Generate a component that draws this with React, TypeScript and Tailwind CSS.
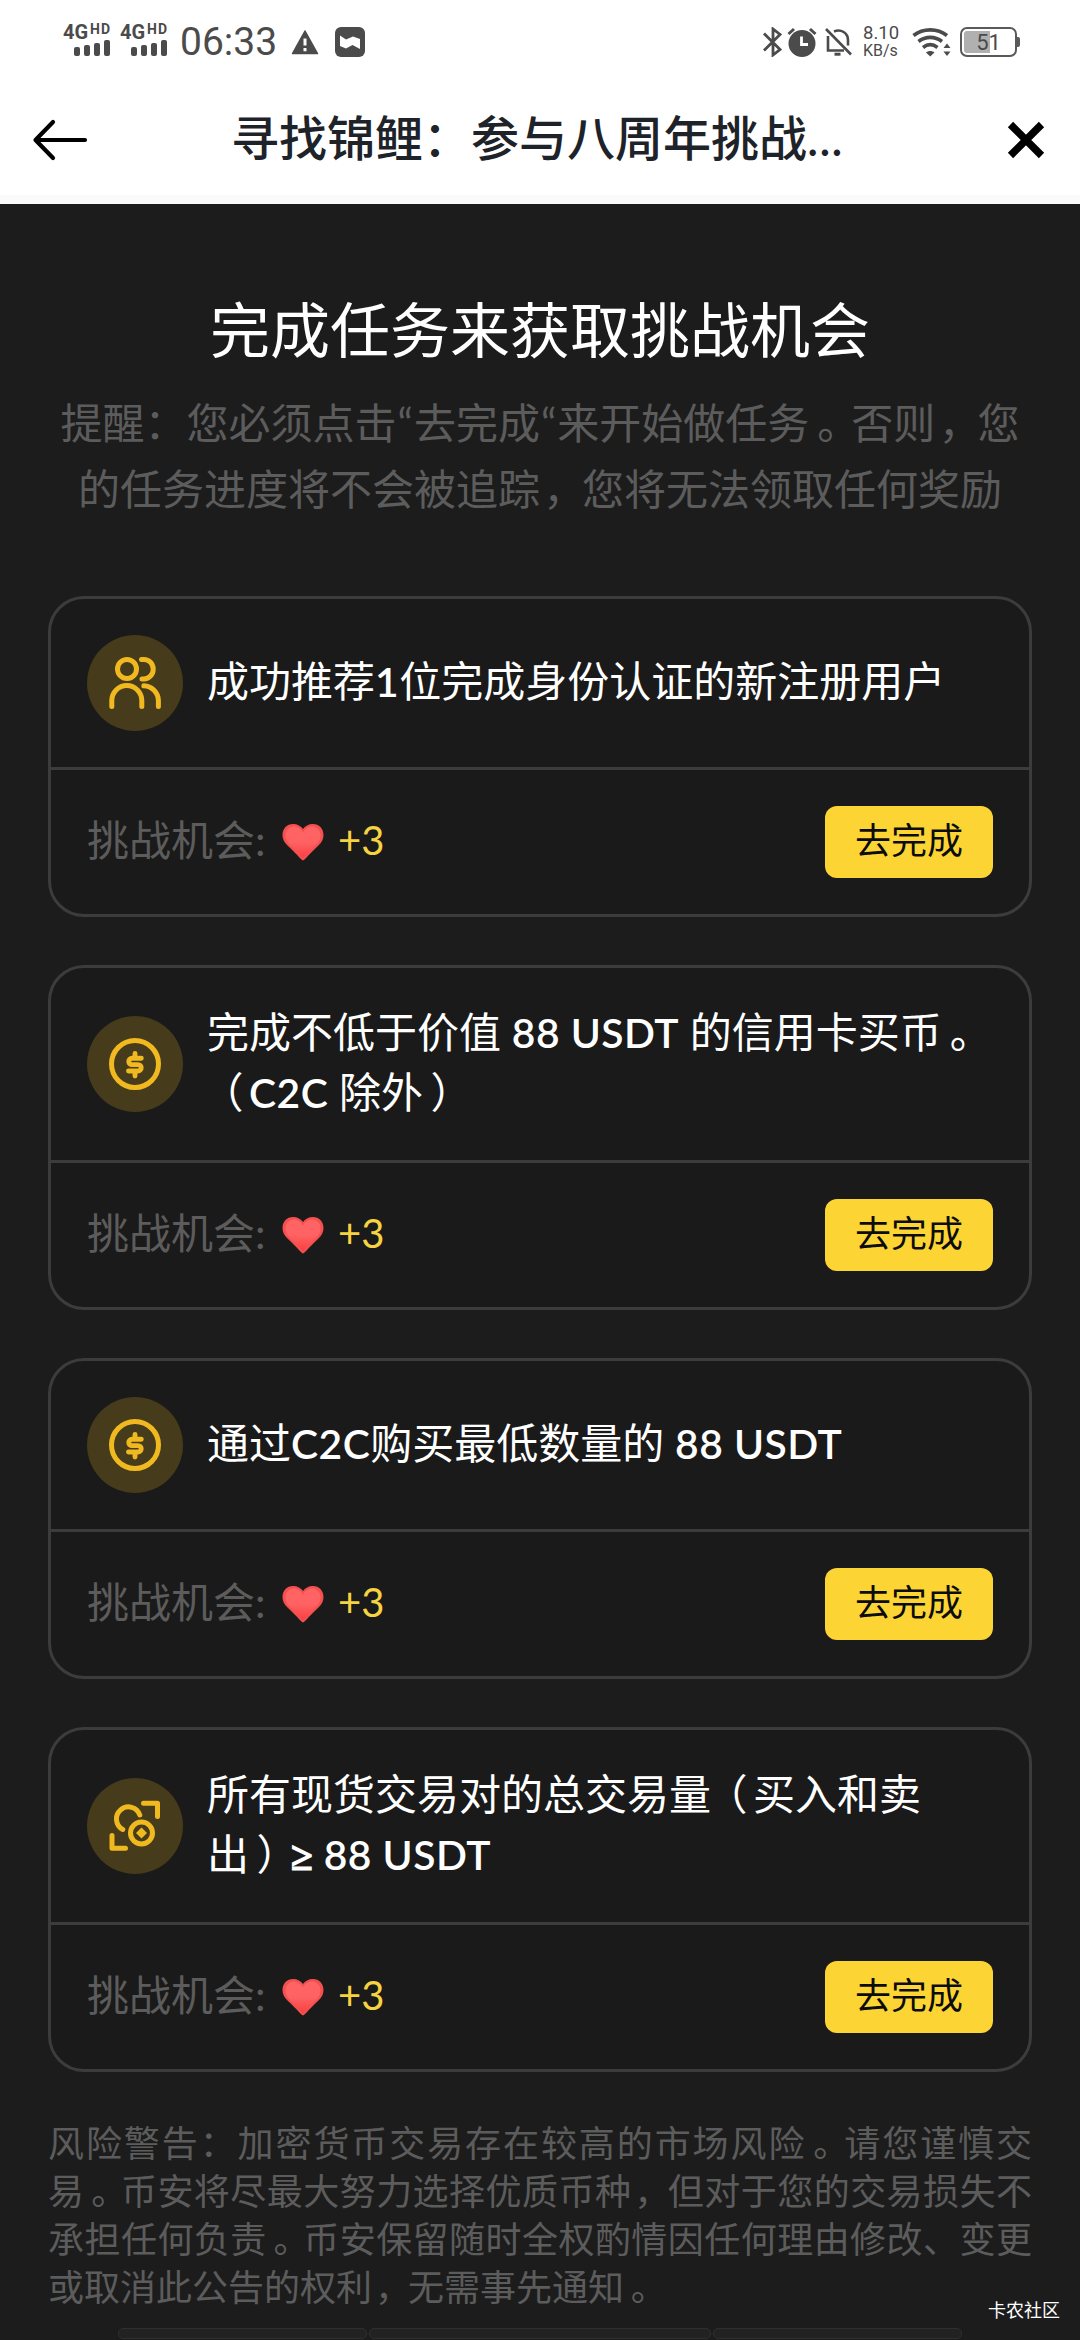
import React from 'react';

type IconName = 'people' | 'dollar' | 'trade';

interface Task {
  id: number;
  icon: IconName;
  lines: string[];
}

const tasks: Task[] = [
  { id: 1, icon: 'people', lines: ['成功推荐1位完成身份认证的新注册用户'] },
  { id: 2, icon: 'dollar', lines: ['完成不低于价值 88 USDT 的信用卡买币。', '（C2C 除外）'] },
  { id: 3, icon: 'dollar', lines: ['通过C2C购买最低数量的 88 USDT'] },
  { id: 4, icon: 'trade', lines: ['所有现货交易对的总交易量（买入和卖', '出）≥ 88 USDT'] },
];

const riskLines = [
  '风险警告：加密货币交易存在较高的市场风险。请您谨慎交',
  '易。币安将尽最大努力选择优质币种，但对于您的交易损失不',
  '承担任何负责。币安保留随时全权酌情因任何理由修改、变更',
];

// Nudges full-width punctuation towards the middle of its cell
const punctuation: Record<string, string> = {
  '。': 'pl-[0.19em] tracking-[-0.19em]',
  '，': 'pl-[0.08em] tracking-[-0.08em]',
  '）': 'pl-[0.18em] tracking-[-0.18em]',
  '（': "pl-[0.37em] pr-[0.13em] [font-feature-settings:'halt']",
  '“': 'px-[1px]',
  '≥': "font-['Noto_Sans'] text-[0.95em] font-bold [-webkit-text-stroke:1.2px_#fff]",
};

const RichText: React.FC<{ text: string }> = ({ text }) => (
  <>
    {text.split(/([A-Z0-9]+(?: [A-Z0-9]+)*|[。，（）“≥])/).map((part, idx) => {
      if (punctuation[part]) return <span key={idx} className={punctuation[part]}>{part}</span>;
      if (/^[A-Z0-9]/.test(part)) return <span key={idx} className="text-[0.97em] tracking-[0.5px] font-semibold">{part}</span>;
      return part;
    })}
  </>
);

const SignalIcon: React.FC = () => (
  <div className="w-[47px] h-[32px] flex flex-col items-end justify-between">
    <div className="w-[47px] flex items-start justify-between font-['Roboto'] font-bold leading-none">
      <span className="text-[20px] leading-[16px]">4G</span>
      <span className="text-[14px] leading-[11px] tracking-[1px] -mr-[1px]">HD</span>
    </div>
    <div className="flex items-end gap-[4px]">
      <div className="w-[6px] h-[9px] rounded-[2px] bg-[#4b4b4b]" />
      <div className="w-[6px] h-[11px] rounded-[2px] bg-[#4b4b4b]" />
      <div className="w-[6px] h-[13px] rounded-[2px] bg-[#4b4b4b]" />
      <div className="w-[6px] h-[16px] rounded-[2px] bg-[#4b4b4b]" />
    </div>
  </div>
);

const StatusBar: React.FC = () => (
  <div className="h-[84px] pl-[63px] pr-[60px] flex justify-between text-[#4b4b4b]">
    <div className="flex items-center h-[84px]">
      <div className="flex gap-[10px] -mt-[4px]">
        <SignalIcon />
        <SignalIcon />
      </div>
      <span className="ml-[13px] w-[99px] font-['Roboto'] text-[39px] leading-[44px]">06:33</span>
      <svg className="ml-[12px]" width="28" height="26" viewBox="0 0 28 26">
        <path d="M14 2L26.5 24.5H1.5Z" fill="#4b4b4b" stroke="#4b4b4b" strokeWidth="1.5" strokeLinejoin="round" />
        <path d="M14 9.5v7M14 19v3.2" stroke="#fff" strokeWidth="3" />
      </svg>
      <svg className="ml-[16px]" width="30" height="30" viewBox="0 0 30 30">
        <rect width="30" height="30" rx="6" fill="#4b4b4b" />
        <path d="M5 8.5L11 12.5L18 9.5L25 12V22L17.5 18L11 21.5L5 19Z" fill="#fff" />
      </svg>
    </div>
    <div className="flex items-center h-[84px]">
      <svg width="19" height="30" viewBox="0 0 19 30" fill="none" stroke="#4b4b4b" strokeWidth="2.8">
        <path d="M1 6.5L17 22.5L10 28V2L17 7.5L1 23.5" />
      </svg>
      <svg className="ml-[5px]" width="30" height="30" viewBox="0 0 30 30">
        <circle cx="15" cy="16.5" r="13.5" fill="#4b4b4b" />
        <path d="M1.5 7L7 2M28.5 7L23 2" stroke="#4b4b4b" strokeWidth="3" />
        <path d="M14.5 9.5V17.5H21" fill="none" stroke="#fff" strokeWidth="2.8" />
      </svg>
      <svg className="ml-[8px]" width="27" height="30" viewBox="0 0 27 30" fill="none" stroke="#4b4b4b" strokeWidth="2.6">
        <path d="M1 2L26 27.5" />
        <path d="M3 9V23.5H19M9 4.5C16 1.5 23 6 23 13V18.5" />
        <path d="M9.5 27.2h6" strokeWidth="3" />
      </svg>
      <div className="ml-[11px] w-[36px] flex flex-col gap-[2px] font-['Roboto'] leading-none">
        <span className="text-[18.5px] leading-[15px]">8.10</span>
        <span className="text-[16px] leading-[15px]">KB/s</span>
      </div>
      <svg className="ml-[13px]" width="39" height="30" viewBox="0 0 39 30" fill="none" stroke="#4b4b4b" strokeWidth="3.6">
        <path d="M1.5 8.5C11 1 25.5 1 35 8.5" />
        <path d="M6.5 14.5C13.5 9 23 9 30 14.5" />
        <path d="M11 20.5C15.5 17 21 17 25.5 20.5" />
        <path d="M14 25.5C16.5 23.5 20 23.5 22.5 25.5L18.2 29.5Z" fill="#4b4b4b" stroke="none" />
        <path d="M31.5 21L35 16.5L38.5 21ZM31.5 24.5L35 29L38.5 24.5Z" fill="#4b4b4b" stroke="none" />
      </svg>
      <div className="ml-[9px] flex items-center">
        <div className="relative w-[57px] h-[30px] p-[2px] border-[2px] border-[#5a5a5a] rounded-[7px]">
          <div className="w-[26px] h-full rounded-l-[3px] bg-[#b0b0b0]" />
          <span className="absolute inset-0 text-center font-['Roboto'] text-[22px] leading-[27px]">51</span>
        </div>
        <div className="w-[3px] h-[10px] rounded-r-[2px] bg-[#5a5a5a]" />
      </div>
    </div>
  </div>
);

const Header: React.FC = () => (
  <header className="h-[204px] bg-white border-b-[9px] border-[#fafafa]">
    <StatusBar />
    <div className="h-[111px] pl-[32px] pr-[35px] flex items-center">
      <svg width="56" height="42" viewBox="0 0 56 42" fill="none" stroke="#000" strokeWidth="4.2" strokeLinecap="round" strokeLinejoin="round">
        <path d="M53 21H3.5M21 3L3.5 21L21 39" />
      </svg>
      <h1 className="-mt-[4px] ml-[143px] whitespace-nowrap text-[48px] leading-[60px] font-medium text-[#1e2329]">
        寻找锦鲤：参与八周年挑战<span className="tracking-[0.8px]">...</span>
      </h1>
      <svg className="ml-auto" width="38" height="38" viewBox="0 0 38 38" fill="none" stroke="#000" strokeWidth="7.5">
        <path d="M3.5 3.5L34.5 34.5M34.5 3.5L3.5 34.5" />
      </svg>
    </div>
  </header>
);

const TaskIcon: React.FC<{ name: IconName }> = ({ name }) => (
  <div className="w-24 h-24 shrink-0 rounded-full bg-[#463b1a]">
    <svg width="96" height="96" viewBox="0 0 96 96" fill="none" stroke="#f0b91f" strokeWidth="5" strokeLinecap="round">
      {name === 'people' && (
        <>
          <circle cx="40" cy="34" r="9.5" />
          <path d="M54.5 24.5h2.5a9.2 9.7 0 0 1 0 19.4h-2" />
          <path d="M24.8 71.5v-6a15 15 0 0 1 30 0v6" />
          <path d="M56.8 50.7a15 15 0 0 1 14.6 14.8v6" />
        </>
      )}
      {name === 'dollar' && (
        <>
          <circle cx="48" cy="48" r="23.5" />
          <path d="M54.3 42.2H45a3.2 3.2 0 0 0 0 6.4h6a3.2 3.2 0 0 1 0 6.4H41.5M48 37.5v3M48 57v3" strokeWidth="4.9" />
        </>
      )}
      {name === 'trade' && (
        <>
          <path d="M56.5 25.2H70.5V38.5M25 57.5V70.3H38.5" strokeLinejoin="round" />
          <path d="M52.8 37A12 12 0 1 0 35.8 51.5" />
          <circle cx="54.5" cy="55" r="11" />
          <path d="M54.5 49.5L60 55L54.5 60.5L49 55Z" fill="#f0b91f" stroke="none" />
        </>
      )}
    </svg>
  </div>
);

const Heart: React.FC = () => (
  <svg width="42" height="38" viewBox="0 0 42 38">
    <defs>
      <linearGradient id="heart-fill" x1="0" y1="0" x2="0" y2="1">
        <stop offset="0" stopColor="#ff6464" />
        <stop offset="0.5" stopColor="#ff6262" />
        <stop offset="1" stopColor="#f93f42" />
      </linearGradient>
    </defs>
    <path
      d="M21 37.5C20 37.5 17 33.5 5.5 22.5C2 19 0.5 16 0.5 12C0.5 5.5 5 1 11 1C15.5 1 19 3 21 6C23 3 26.5 1 31 1C37 1 41.5 5.5 41.5 12C41.5 16 40 19 36.5 22.5C25 33.5 22 37.5 21 37.5Z"
      fill="#f4504f"
    />
    <path
      d="M21 35C20 34 17 31 8 22C5 19 3.5 16 3.5 12.5C3.5 7.5 7 4 11.5 3.5C16 3.5 19 6 21 9.5C23 6 26 3.5 30.5 3.5C35 4 38.5 7.5 38.5 12.5C38.5 16 37 19 34 22C25 31 22 34 21 35Z"
      fill="url(#heart-fill)"
    />
  </svg>
);

const TaskCard: React.FC<{ task: Task }> = ({ task }) => (
  <div className="border-[3px] border-[#3c3c3c] rounded-[36px] bg-[#1a1a1a]">
    <div className="p-9 flex items-center gap-6 border-b-[3px] border-[#3c3c3c]">
      <TaskIcon name={task.icon} />
      <div className="-mt-[2px] mb-[2px] text-[42px] leading-[60px] text-white whitespace-nowrap">
        {task.lines.map((line) => (
          <div key={line} className="h-[60px]">
            <RichText text={line} />
          </div>
        ))}
      </div>
    </div>
    <div className="p-9 h-36 flex items-center justify-between">
      <div className="flex items-center text-[42px] leading-[60px]">
        <span className="-mt-1 w-[195px] text-[#5c5c5c]">挑战机会:</span>
        <Heart />
        <span className="-mt-1 ml-[14px] text-[40px] text-[#f5d341]">+3</span>
      </div>
      <button className="w-[168px] h-[72px] pb-1 rounded-xl bg-[#fcd535] text-[36px] leading-[68px] text-[#0c0c0c]">去完成</button>
    </div>
  </div>
);

export default function App() {
  return (
    <div className="relative w-[1080px] h-[2340px] overflow-hidden flex flex-col bg-[#1c1c1c] font-['Lato','Noto_Sans_CJK_SC',sans-serif]">
      <Header />
      <main className="px-12 pt-[84px] flex flex-col">
        <h2 className="text-center text-[60px] leading-[84px] text-white">完成任务来获取挑战机会</h2>
        <div className="mt-[18px] text-center text-[42px] leading-[66px] text-[#5c5c5c] whitespace-nowrap">
          <p><RichText text="提醒：您必须点击“去完成“来开始做任务。否则，您" /></p>
          <p><RichText text="的任务进度将不会被追踪，您将无法领取任何奖励" /></p>
        </div>
        <div className="mt-[74px] flex flex-col gap-12">
          {tasks.map((task) => (
            <TaskCard key={task.id} task={task} />
          ))}
        </div>
        <div className="mt-[47px] text-[36px] leading-[48px] text-[#5c5c5c]">
          {riskLines.map((line) => (
            <p key={line} className="h-12 text-justify [text-align-last:justify]">
              <RichText text={line} />
            </p>
          ))}
          <p className="h-12 w-fit">
            <RichText text="或取消此公告的权利，无需事先通知。" />
          </p>
        </div>
        <div className="mt-[17px] pl-[70px] flex gap-[2px]">
          <div className="w-[249px] h-[11px] rounded-[5px] border border-[#2f2f2f] bg-[#222222]" />
          <div className="w-[342px] h-[11px] rounded-[5px] border border-[#2f2f2f] bg-[#222222]" />
          <div className="w-[249px] h-[11px] rounded-[5px] border border-[#2f2f2f] bg-[#222222]" />
        </div>
      </main>
      {/* Watermark */}
      <span className="absolute right-[20px] bottom-[18px] text-[18px] leading-[24px] text-white">卡农社区</span>
    </div>
  );
}
